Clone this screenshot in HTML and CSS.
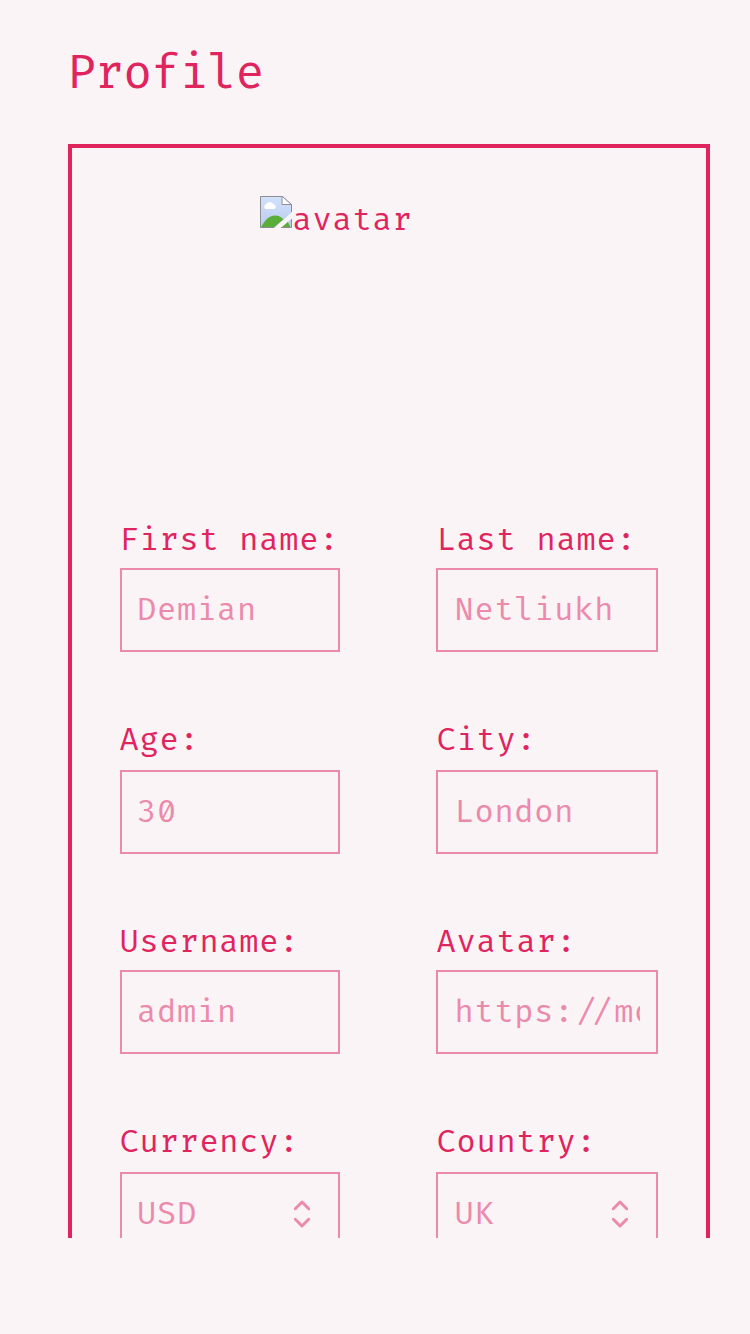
FILE: index.html
```html
<!DOCTYPE html>
<html lang="en">
<head>
<meta charset="utf-8">
<title>Profile</title>
<link rel="stylesheet" href="styles.css">
</head>
<body>
<main class="page">
  <h1 class="title">Profile</h1>
  <section class="card">
    <div class="avatar">
      <svg class="avatar-icon" viewBox="0 0 32 32" width="32" height="32">
        <defs><linearGradient id="sky" x1="0" y1="0" x2="0" y2="1"><stop offset="0" stop-color="#d3e1fb"/><stop offset="1" stop-color="#b9ccee"/></linearGradient></defs>
        <path d="M0 0H23L32 9V16L14 32H0Z" fill="url(#sky)"/>
        <path d="M1 31.500C4 25 9 19.500 15 19.500C19 19.500 21 21 23.500 23.200L14 31.500Z" fill="#5aad38"/>
        <path d="M21.500 31.500L28 25.800L31 31.500Z" fill="#5aad38"/>
        <path d="M28 25.800L31.500 22.700V31.500H31Z" fill="#b9ccee"/>
        <path d="M5.500 13A2.600 2.600 0 0 1 6 8.300A4.300 4.300 0 0 1 13.500 8.300A2.500 2.500 0 0 1 14.500 13Z" fill="#fff"/>
        <path d="M22 1V9H31Z" fill="#fff"/>
        <path d="M14 31.500H.5V.5H22.500L31.500 8.500V16M22 .5V8.500H31.500M21 31.500H31.500V23" fill="none" stroke="#8c8e91"/>
      </svg>
      <span class="avatar-alt">avatar</span>
    </div>
    <div class="fields">
      <div class="field"><div class="label">First name:</div><div class="box"><span class="value">Demian</span></div></div>
      <div class="field"><div class="label">Last name:</div><div class="box"><span class="value">Netliukh</span></div></div>
      <div class="field"><div class="label">Age:</div><div class="box"><span class="value">30</span></div></div>
      <div class="field"><div class="label">City:</div><div class="box"><span class="value">London</span></div></div>
      <div class="field"><div class="label">Username:</div><div class="box"><span class="value">admin</span></div></div>
      <div class="field"><div class="label">Avatar:</div><div class="box"><span class="value">https:<span class="slashes">//</span>mo</span></div></div>
      <div class="field"><div class="label">Currency:</div><div class="box"><span class="value">USD</span><svg class="chevrons" viewBox="0 0 16 28" width="16" height="28"><path d="M1.300 8.700L8 2L14.700 8.700M1.300 19.300L8 26L14.700 19.300"/></svg></div></div>
      <div class="field"><div class="label">Country:</div><div class="box"><span class="value">UK</span><svg class="chevrons" viewBox="0 0 16 28" width="16" height="28"><path d="M1.300 8.700L8 2L14.700 8.700M1.300 19.300L8 26L14.700 19.300"/></svg></div></div>
    </div>
  </section>
</main>
</body>
</html>
```
FILE: styles.css
```css
* { box-sizing: border-box; }
html { background: #faf4f6; }
body {
  margin: 0;
  height: 1334px;
  overflow: hidden;
  color: #e0245e;
  font-family: "Fira Code", "DejaVu Sans Mono", monospace;
  font-size: 31.2px;
  letter-spacing: 0.8px;
  white-space: nowrap;
}
.page {
  height: 1238px;
  padding: 45px 40px 0 68px;
  overflow: hidden;
}
.title {
  margin: 0 0 42px -1px;
  font-size: 46.8px;
  font-weight: 400;
  line-height: 57px;
  letter-spacing: -0.7px;
}
.card {
  width: 642px;
  height: 1180px;
  padding: 48px;
  border: 4px solid #e0245e;
}
.avatar {
  display: flex;
  align-items: flex-start;
  width: 256px;
  height: 256px;
  margin: 0 0 68px 140px;
}
.avatar-icon { flex: none; }
.avatar-alt {
  margin-left: 0.5px;
  line-height: 49px;
}
.fields {
  display: grid;
  grid-template-columns: 220px 222px;
  grid-auto-rows: 132px 134px;
  gap: 68px 96px;
}
.field {
  display: flex;
  flex-direction: column;
  justify-content: space-between;
}
.label {
  margin-left: 0.5px;
  line-height: 41px;
}
.field:nth-child(odd) .label { margin-left: -0.6px; }
.box {
  display: flex;
  align-items: center;
  height: 84px;
  padding: 0 16px 0 16.4px;
  border: 2px solid #ec8aab;
  color: #ec8aab;
}
.field:nth-child(odd) .box { padding-left: 15px; }
.value {
  flex: 1;
  margin-top: 1px;
  overflow: hidden;
  line-height: 41px;
}
.slashes {
  margin: 0 0.6px 0 1px;
  letter-spacing: 0;
}
.chevrons {
  flex: none;
  margin-right: 12px;
  fill: none;
  stroke: #ec8aab;
  stroke-width: 3;
  stroke-linecap: round;
  stroke-linejoin: round;
}
```
